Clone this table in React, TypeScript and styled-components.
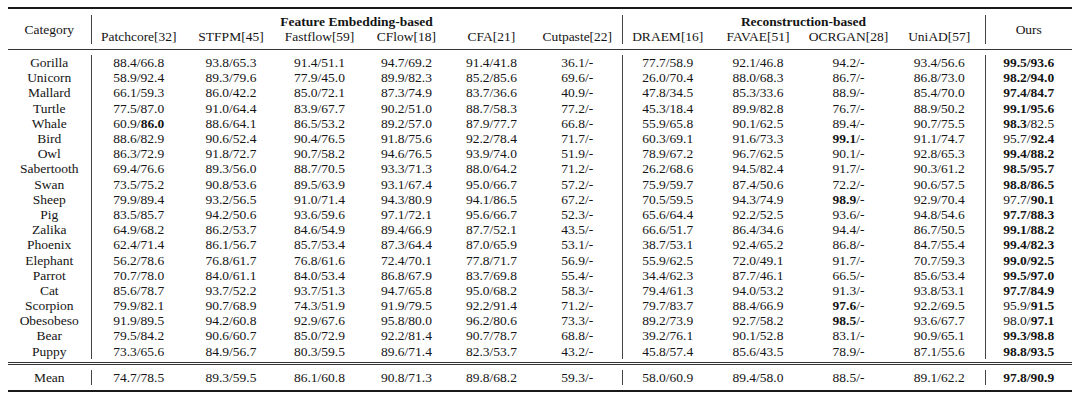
import React from "react";
import { createGlobalStyle, styled } from "styled-components";

const GlobalStyle = createGlobalStyle`
  html, body {
    margin: 0;
    padding: 0;
    background: #ffffff;
  }
  body {
    font-family: "Liberation Serif", "Times New Roman", serif;
    color: #141414;
  }
`;

const featureMethods = ["Patchcore[32]", "STFPM[45]", "Fastflow[59]", "CFlow[18]", "CFA[21]", "Cutpaste[22]"];
const reconMethods = ["DRAEM[16]", "FAVAE[51]", "OCRGAN[28]", "UniAD[57]"];

const colWidths = [83, 95, 90, 87, 87, 83, 89, 91, 90, 91, 91, 87];

// bold parts are wrapped in ** **
const rows: [string, string[]][] = [
  ["Gorilla", ["88.4/66.8", "93.8/65.3", "91.4/51.1", "94.7/69.2", "91.4/41.8", "36.1/-", "77.7/58.9", "92.1/46.8", "94.2/-", "93.4/56.6", "**99.5/93.6**"]],
  ["Unicorn", ["58.9/92.4", "89.3/79.6", "77.9/45.0", "89.9/82.3", "85.2/85.6", "69.6/-", "26.0/70.4", "88.0/68.3", "86.7/-", "86.8/73.0", "**98.2/94.0**"]],
  ["Mallard", ["66.1/59.3", "86.0/42.2", "85.0/72.1", "87.3/74.9", "83.7/36.6", "40.9/-", "47.8/34.5", "85.3/33.6", "88.9/-", "85.4/70.0", "**97.4/84.7**"]],
  ["Turtle", ["77.5/87.0", "91.0/64.4", "83.9/67.7", "90.2/51.0", "88.7/58.3", "77.2/-", "45.3/18.4", "89.9/82.8", "76.7/-", "88.9/50.2", "**99.1/95.6**"]],
  ["Whale", ["60.9/**86.0**", "88.6/64.1", "86.5/53.2", "89.2/57.0", "87.9/77.7", "66.8/-", "55.9/65.8", "90.1/62.5", "89.4/-", "90.7/75.5", "**98.3**/82.5"]],
  ["Bird", ["88.6/82.9", "90.6/52.4", "90.4/76.5", "91.8/75.6", "92.2/78.4", "71.7/-", "60.3/69.1", "91.6/73.3", "**99.1**/-", "91.1/74.7", "95.7/**92.4**"]],
  ["Owl", ["86.3/72.9", "91.8/72.7", "90.7/58.2", "94.6/76.5", "93.9/74.0", "51.9/-", "78.9/67.2", "96.7/62.5", "90.1/-", "92.8/65.3", "**99.4/88.2**"]],
  ["Sabertooth", ["69.4/76.6", "89.3/56.0", "88.7/70.5", "93.3/71.3", "88.0/64.2", "71.2/-", "26.2/68.6", "94.5/82.4", "91.7/-", "90.3/61.2", "**98.5/95.7**"]],
  ["Swan", ["73.5/75.2", "90.8/53.6", "89.5/63.9", "93.1/67.4", "95.0/66.7", "57.2/-", "75.9/59.7", "87.4/50.6", "72.2/-", "90.6/57.5", "**98.8/86.5**"]],
  ["Sheep", ["79.9/89.4", "93.2/56.5", "91.0/71.4", "94.3/80.9", "94.1/86.5", "67.2/-", "70.5/59.5", "94.3/74.9", "**98.9**/-", "92.9/70.4", "97.7/**90.1**"]],
  ["Pig", ["83.5/85.7", "94.2/50.6", "93.6/59.6", "97.1/72.1", "95.6/66.7", "52.3/-", "65.6/64.4", "92.2/52.5", "93.6/-", "94.8/54.6", "**97.7/88.3**"]],
  ["Zalika", ["64.9/68.2", "86.2/53.7", "84.6/54.9", "89.4/66.9", "87.7/52.1", "43.5/-", "66.6/51.7", "86.4/34.6", "94.4/-", "86.7/50.5", "**99.1/88.2**"]],
  ["Phoenix", ["62.4/71.4", "86.1/56.7", "85.7/53.4", "87.3/64.4", "87.0/65.9", "53.1/-", "38.7/53.1", "92.4/65.2", "86.8/-", "84.7/55.4", "**99.4/82.3**"]],
  ["Elephant", ["56.2/78.6", "76.8/61.7", "76.8/61.6", "72.4/70.1", "77.8/71.7", "56.9/-", "55.9/62.5", "72.0/49.1", "91.7/-", "70.7/59.3", "**99.0/92.5**"]],
  ["Parrot", ["70.7/78.0", "84.0/61.1", "84.0/53.4", "86.8/67.9", "83.7/69.8", "55.4/-", "34.4/62.3", "87.7/46.1", "66.5/-", "85.6/53.4", "**99.5/97.0**"]],
  ["Cat", ["85.6/78.7", "93.7/52.2", "93.7/51.3", "94.7/65.8", "95.0/68.2", "58.3/-", "79.4/61.3", "94.0/53.2", "91.3/-", "93.8/53.1", "**97.7/84.9**"]],
  ["Scorpion", ["79.9/82.1", "90.7/68.9", "74.3/51.9", "91.9/79.5", "92.2/91.4", "71.2/-", "79.7/83.7", "88.4/66.9", "**97.6**/-", "92.2/69.5", "95.9/**91.5**"]],
  ["Obesobeso", ["91.9/89.5", "94.2/60.8", "92.9/67.6", "95.8/80.0", "96.2/80.6", "73.3/-", "89.2/73.9", "92.7/58.2", "**98.5**/-", "93.6/67.7", "98.0/**97.1**"]],
  ["Bear", ["79.5/84.2", "90.6/60.7", "85.0/72.9", "92.2/81.4", "90.7/78.7", "68.8/-", "39.2/76.1", "90.1/52.8", "83.1/-", "90.9/65.1", "**99.3/98.8**"]],
  ["Puppy", ["73.3/65.6", "84.9/56.7", "80.3/59.5", "89.6/71.4", "82.3/53.7", "43.2/-", "45.8/57.4", "85.6/43.5", "78.9/-", "87.1/55.6", "**98.8/93.5**"]],
];

const meanRow: [string, string[]] = [
  "Mean",
  ["74.7/78.5", "89.3/59.5", "86.1/60.8", "90.8/71.3", "89.8/68.2", "59.3/-", "58.0/60.9", "89.4/58.0", "88.5/-", "89.1/62.2", "**97.8/90.9**"],
];

// columns followed by a vertical rule: Category, Cutpaste, UniAD
const dividerAfter = new Set([0, 6, 10]);

const renderValue = (value: string) =>
  value.split("**").map((part, i) => (i % 2 === 1 ? <b key={i}>{part}</b> : <React.Fragment key={i}>{part}</React.Fragment>));

const DataRow = ({ row, height }: { row: [string, string[]]; height: number }) => (
  <BodyRow $height={height}>
    <Cell $divider>{row[0]}</Cell>
    {row[1].map((v, i) => (
      <Cell key={i} $divider={dividerAfter.has(i + 1)}>
        {renderValue(v)}
      </Cell>
    ))}
  </BodyRow>
);

export default function App() {
  return (
    <>
      <GlobalStyle />
      <Frame>
        <Table>
          <colgroup>
            {colWidths.map((w, i) => (
              <col key={i} style={{ width: w }} />
            ))}
          </colgroup>
          <thead>
            <Spacer $height={6}>
              <td colSpan={12} />
            </Spacer>
            <HeadRow $height={14}>
              <HeadCell rowSpan={2} $divider>
                Category
              </HeadCell>
              <GroupCell colSpan={6} $divider>
                Feature Embedding-based
              </GroupCell>
              <GroupCell colSpan={4} $divider>
                Reconstruction-based
              </GroupCell>
              <HeadCell rowSpan={2}>Ours</HeadCell>
            </HeadRow>
            <HeadRow $height={15}>
              {featureMethods.map((m, i) => (
                <MethodCell key={m} $divider={i === featureMethods.length - 1}>
                  {m}
                </MethodCell>
              ))}
              {reconMethods.map((m, i) => (
                <MethodCell key={m} $divider={i === reconMethods.length - 1}>
                  {m}
                </MethodCell>
              ))}
            </HeadRow>
            <Spacer $height={5} $rule>
              <td colSpan={12} />
            </Spacer>
          </thead>
          <tbody>
            <Spacer $height={6}>
              <td colSpan={12} />
            </Spacer>
            {rows.map((r) => (
              <DataRow key={r[0]} row={r} height={15.2} />
            ))}
            <Spacer $height={4} $rule>
              <td colSpan={12} />
            </Spacer>
            <Spacer $height={2} $rule>
              <td colSpan={12} />
            </Spacer>
            <Spacer $height={5}>
              <td colSpan={12} />
            </Spacer>
          </tbody>
          <tfoot>
            <DataRow row={meanRow} height={15} />
            <Spacer $height={5}>
              <td colSpan={12} />
            </Spacer>
          </tfoot>
        </Table>
      </Frame>
    </>
  );
}

const Frame = styled.div`
  margin: 7px 8px 0;
  width: 1064px;
  border-top: 2px solid #1a1a1a;
  border-bottom: 2px solid #1a1a1a;
`;

const Table = styled.table`
  width: 1064px;
  table-layout: fixed;
  border-collapse: collapse;
  border-spacing: 0;
  font-size: 13.5px;
`;

const Spacer = styled.tr<{ $height: number; $rule?: boolean }>`
  height: ${(p) => p.$height}px;
  td {
    padding: 0;
    border-bottom: ${(p) => (p.$rule ? "1px solid #333" : "none")};
  }
`;

const HeadRow = styled.tr<{ $height: number }>`
  height: ${(p) => p.$height}px;
`;

const BodyRow = styled.tr<{ $height: number }>`
  height: ${(p) => p.$height}px;
`;

const Cell = styled.td<{ $divider?: boolean }>`
  padding: 0;
  line-height: 15px;
  text-align: center;
  white-space: nowrap;
  border-right: ${(p) => (p.$divider ? "1px solid #444" : "none")};

  b {
    font-weight: 700;
  }
`;

const HeadCell = styled.th<{ $divider?: boolean }>`
  padding: 0;
  font-weight: 400;
  line-height: 15px;
  text-align: center;
  vertical-align: middle;
  border-right: ${(p) => (p.$divider ? "1px solid #444" : "none")};
`;

const GroupCell = styled(HeadCell)`
  font-weight: 700;
  vertical-align: bottom;
  line-height: 14px;
`;

const MethodCell = styled(HeadCell)`
  white-space: nowrap;
  vertical-align: top;
`;
